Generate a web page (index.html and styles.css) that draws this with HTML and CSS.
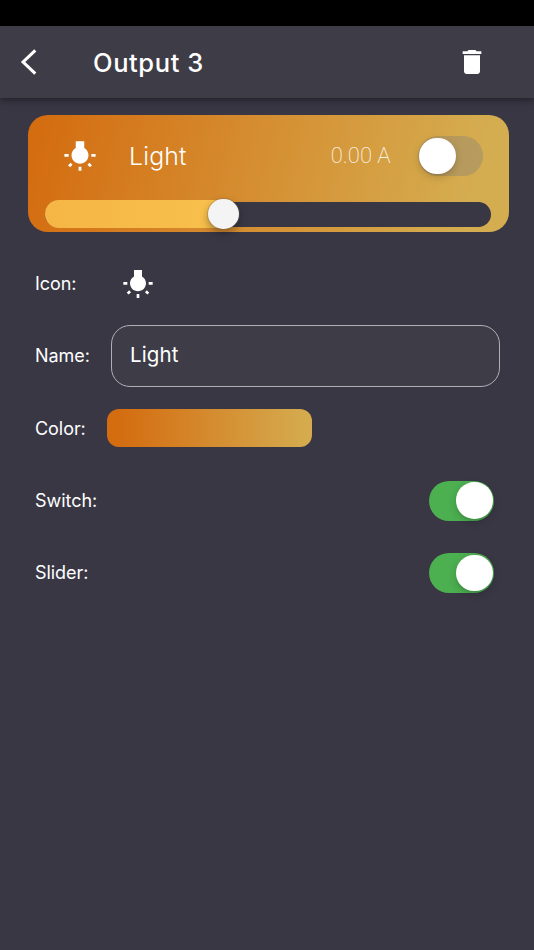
FILE: index.html
```html
<!DOCTYPE html>
<html lang="en">
<head>
<meta charset="utf-8">
<title>Output 3</title>
<link rel="stylesheet" href="styles.css">
</head>
<body>
<svg class="sprite" width="0" height="0">
  <symbol id="bulb" viewBox="0 0 24 24"><path d="M3.55 18.54l1.41 1.41 1.8-1.79-1.41-1.41-1.8 1.79zM11 22.45h2V19.5h-2v2.95zM4 10.5H1v2h3v-2zm11-4.19V1.5H9v4.81C7.21 7.35 6 9.28 6 11.5c0 3.31 2.69 6 6 6s6-2.69 6-6c0-2.22-1.21-4.15-3-5.19zm5 4.19v2h3v-2h-3zm-2.76 7.66l1.79 1.8 1.41-1.41-1.8-1.79-1.4 1.4z"/></symbol>
</svg>
<div class="status"></div>
<header class="bar">
  <svg class="back" viewBox="0 0 18 28"><path d="M16.3 2.3L4.1 14l12.2 11.7"/></svg>
  <h1 class="title">Output 3</h1>
  <svg class="trash" viewBox="0 0 24 24"><path d="M6 19c0 1.1.9 2 2 2h8c1.100 0 2-.9 2-2V7H6v12zM19 4h-3.500l-1-1h-5l-1 1H5v2h14V4z"/></svg>
</header>
<main>
  <section class="card">
    <div class="card-top">
      <svg class="card-icon"><use href="#bulb"/></svg>
      <span class="card-name">Light</span>
      <span class="amps">0.00 A</span>
      <span class="toggle"><i class="knob"></i></span>
    </div>
    <div class="slider"><div class="rail"></div><div class="fill"></div><i class="thumb"></i></div>
  </section>
  <div class="rows">
    <div class="row"><span class="label">Icon:</span><svg class="row-icon"><use href="#bulb"/></svg></div>
    <div class="row"><span class="label">Name:</span><div class="input"><span>Light</span></div></div>
    <div class="row"><span class="label">Color:</span><div class="swatch"></div></div>
    <div class="row"><span class="label">Switch:</span><span class="toggle on"><i class="knob"></i></span></div>
    <div class="row"><span class="label">Slider:</span><span class="toggle on"><i class="knob"></i></span></div>
  </div>
</main>
</body>
</html>
```
FILE: styles.css
```css
* { box-sizing: border-box; }
body {
  margin: 0;
  height: 950px;
  overflow: hidden;
  background: #393744;
  color: #fff;
  font-family: Inter, "Liberation Sans", sans-serif;
}
.sprite { position: absolute; }
svg { display: block; flex: none; fill: #fff; }
.status { height: 26px; background: #000; }
.bar {
  height: 72px;
  display: flex;
  align-items: center;
  padding: 0 46px 0 18.700px;
  background: #3e3d47;
  box-shadow: 0 2px 5px rgba(0, 0, 0, .3), 0 4px 10px rgba(0, 0, 0, .12);
}
.back { width: 18px; height: 28px; }
.back path { fill: none; stroke: #fff; stroke-width: 3.1; }
.title { margin: 0 auto 0 56.300px; padding-top: 1px; font-size: 25.500px; line-height: 32px; font-weight: 480; letter-spacing: .6px; white-space: nowrap; }
.trash { width: 32px; height: 32px; }
main { padding: 16.700px 25.300px 0 27.500px; }
.card {
  height: 117px;
  border-radius: 20px;
  background: linear-gradient(104deg, #d46c10 2%, #d59437 55%, #d4ad50 91%);
}
.card-top { height: 83px; display: flex; align-items: center; padding: 0 25.500px 0 35px; }
.card-icon { width: 34px; height: 34px; margin-top: -1px; }
.card-name { margin-left: 32.600px; margin-top: -1px; font-size: 24.800px; font-weight: 300; letter-spacing: .15px; }
.amps { margin-left: auto; margin-top: -1px; font-family: Roboto, sans-serif; font-size: 22px; font-weight: 200; color: rgba(255, 255, 255, .85); }
.toggle {
  width: 65.500px;
  height: 40px;
  border-radius: 20px;
  display: flex;
  align-items: center;
  padding: 0 1.600px;
  background: rgba(121, 121, 128, .32);
}
.amps + .toggle { margin-left: 27px; }
.knob { width: 36.600px; height: 36.600px; border-radius: 50%; background: #fff; box-shadow: 0 3px 8px rgba(0, 0, 0, .17), 0 2px 2px rgba(0, 0, 0, .06); }
.toggle.on { margin-left: auto; justify-content: flex-end; background: #4caf50; }
.slider { height: 31px; margin: 1px 17.500px 0 17.500px; display: grid; grid-template-columns: 178px 1fr; align-items: center; }
.rail { grid-area: 1 / 1 / 2 / 3; height: 25px; border-radius: 13px; background: #393744; }
.fill { grid-area: 1 / 1; height: 28px; border-radius: 14px 0 0 14px; background: linear-gradient(90deg, #f5b646, #f8c04c); }
.thumb {
  grid-area: 1 / 1;
  justify-self: end;
  width: 30.500px;
  height: 30.500px;
  margin-right: -15.500px;
  border-radius: 50%;
  background: #f4f4f4;
  box-shadow: 0 0 0 1px rgba(120, 105, 85, .3), 0 4px 8px rgba(0, 0, 0, .35);
}
.rows { margin: 15.800px 14.600px 0 7.500px; display: grid; grid-auto-rows: 72.300px; }
.row { display: flex; align-items: center; }
.label { width: 76px; flex: none; font-size: 18px; letter-spacing: -.05px; white-space: nowrap; }
.row-icon { width: 32px; height: 32px; margin: 1px 0 0 10.700px; }
.input {
  flex: 1;
  height: 62px;
  margin-right: -5.500px;
  border: 1.300px solid #b0afb5;
  border-radius: 19px;
  background: #3e3d47;
  display: flex;
  align-items: center;
  padding: 0 0 2px 18px;
  font-size: 20.500px;
  letter-spacing: .15px;
}
.swatch { width: 205px; height: 37.500px; margin-left: -4px; border-radius: 12px; background: linear-gradient(90deg, #d46c10 5%, #d5ab4e 97%); }
```
